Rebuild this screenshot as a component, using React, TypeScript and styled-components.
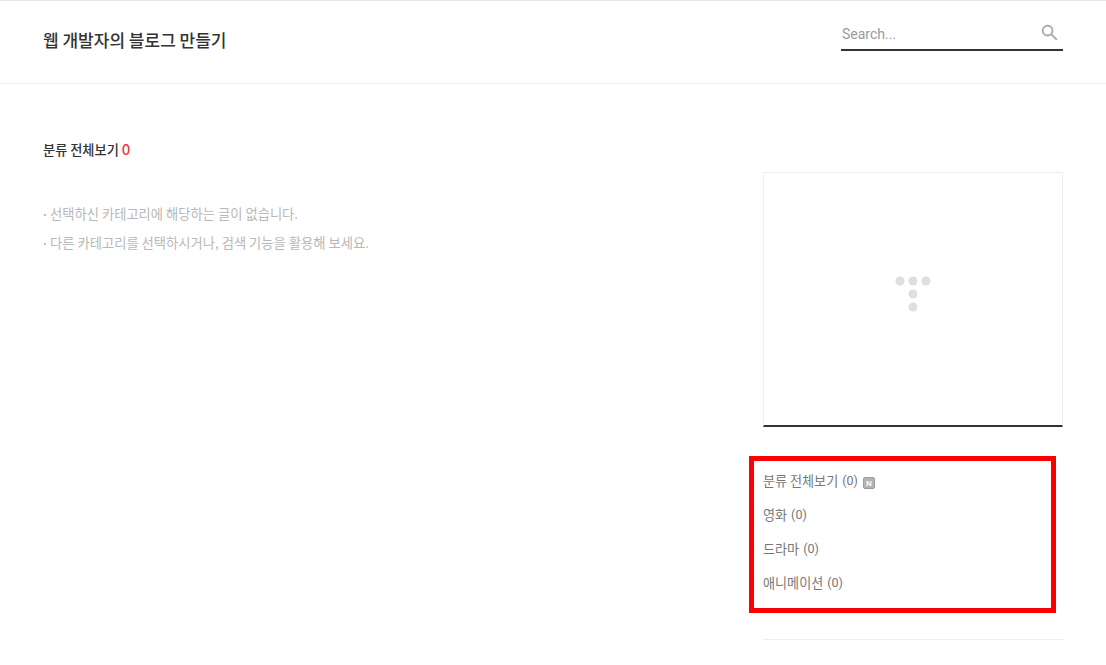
import React from 'react';
import styled, { createGlobalStyle } from 'styled-components';

const GlobalStyle = createGlobalStyle`
    html, body {
        margin: 0;
        padding: 0;
        background: #fff;
        height: 665px;
        overflow: hidden;
    }
    * {
        box-sizing: border-box;
    }
    body {
        font-family: "Noto Sans CJK KR", "Noto Sans", sans-serif;
        color: #333;
    }
`

const Header = styled.header`
    display: flex;
    justify-content: space-between;
    align-items: center;
    height: 84px;
    padding: 0 43px 4px;
    border-top: 1px solid #e6e6e6;
    border-bottom: 1px solid #ebebeb;
`

const BlogTitle = styled.h1`
    margin: 0;
    font-size: 17px;
    line-height: 24px;
    font-weight: 500;
    color: #333;
`

const SearchBox = styled.div`
    display: flex;
    justify-content: space-between;
    align-items: center;
    width: 222px;
    height: 32px;
    margin-bottom: 11px;
    padding: 0 1px;
    border-bottom: 2px solid #333;
`

const SearchText = styled.span`
    font-family: Roboto, sans-serif;
    font-size: 14px;
    color: #9a9a9a;
`

const SearchIcon = styled.svg`
    display: block;
    width: 17px;
    height: 17px;
    margin-right: 4px;
    margin-top: -2px;
`

const Body = styled.div`
    display: flex;
    justify-content: space-between;
    padding: 0 43px;
`

const Main = styled.main`
    padding-top: 54px;
`

const ResultTitle = styled.h2`
    margin: 0 0 39px;
    font-size: 13.2px;
    line-height: 22px;
    font-weight: 500;
    color: #333;
`

const ResultCount = styled.span`
    color: #f03a3a;
    font-size: 15px;
`

const Notice = styled.p`
    margin: 0;
    font-size: 13.3px;
    line-height: 28px;
    color: #b8b8b8;

    &::before {
        content: "·";
        display: inline-block;
        width: 7px;
        font-family: "Liberation Sans", sans-serif;
        font-weight: 700;
    }
`

const Sidebar = styled.aside`
    width: 300px;
    padding-top: 88px;
`

const AdBox = styled.div`
    display: flex;
    align-items: center;
    justify-content: center;
    height: 255px;
    border: 1px solid #eeeeee;
    border-bottom: 2px solid #333;
`

const DotLogo = styled.svg`
    display: block;
    width: 36px;
    height: 36px;
    margin-bottom: 11px;
`

const CategoryNav = styled.nav`
    position: relative;
    margin-top: 36px;
    padding-bottom: 40px;
    border-bottom: 1px solid #eeeeee;
`

const Highlight = styled.div`
    position: absolute;
    top: -7px;
    left: -14px;
    width: 307px;
    height: 157px;
    border: 5px solid #ff0000;
`

const CategoryItem = styled.div`
    display: flex;
    align-items: center;
    height: 34px;
    font-size: 13.1px;
    color: #777;
`

const CategoryCount = styled.span`
    margin-left: 4px;
    font-family: Roboto, sans-serif;
    font-size: 12.5px;
`

const NewBadge = styled.span`
    display: inline-flex;
    align-items: center;
    justify-content: center;
    width: 12px;
    height: 12px;
    margin-left: 5px;
    margin-top: 6px;
    border: 1px solid #9c9c9c;
    border-radius: 2px;
    background: #b4b4b4;
    color: #fff;
    font-family: "Liberation Sans", sans-serif;
    font-size: 8px;
    font-weight: 700;
`

const categories = [
    { name: '분류 전체보기', count: 0, isNew: true },
    { name: '영화', count: 0 },
    { name: '드라마', count: 0 },
    { name: '애니메이션', count: 0 },
];

function App() {
    return (
        <>
            <GlobalStyle />
            <Header>
                <BlogTitle>웹 개발자의 블로그 만들기</BlogTitle>
                <SearchBox>
                    <SearchText>Search...</SearchText>
                    <SearchIcon viewBox="0 0 18 18" fill="none" stroke="#ababab" strokeWidth="2">
                        <circle cx="7" cy="7" r="5.2" />
                        <path d="M11 11l5.8 5.8" />
                    </SearchIcon>
                </SearchBox>
            </Header>
            <Body>
                <Main>
                    <ResultTitle>분류 전체보기 <ResultCount>0</ResultCount></ResultTitle>
                    <Notice>선택하신 카테고리에 해당하는 글이 없습니다.</Notice>
                    <Notice>다른 카테고리를 선택하시거나, 검색 기능을 활용해 보세요.</Notice>
                </Main>
                <Sidebar>
                    <AdBox>
                        <DotLogo viewBox="0 0 36 36" fill="#dfdfdf">
                            <circle cx="5" cy="5" r="4.5" />
                            <circle cx="18" cy="5" r="4.5" />
                            <circle cx="31" cy="5" r="4.5" />
                            <circle cx="18" cy="18" r="4.5" />
                            <circle cx="18" cy="31" r="4.5" />
                        </DotLogo>
                    </AdBox>
                    <CategoryNav>
                        {categories.map((c) => (
                            <CategoryItem key={c.name}>
                                {c.name}
                                <CategoryCount>({c.count})</CategoryCount>
                                {c.isNew && <NewBadge>N</NewBadge>}
                            </CategoryItem>
                        ))}
                        <Highlight />
                    </CategoryNav>
                </Sidebar>
            </Body>
        </>
    );
}

export default App;
